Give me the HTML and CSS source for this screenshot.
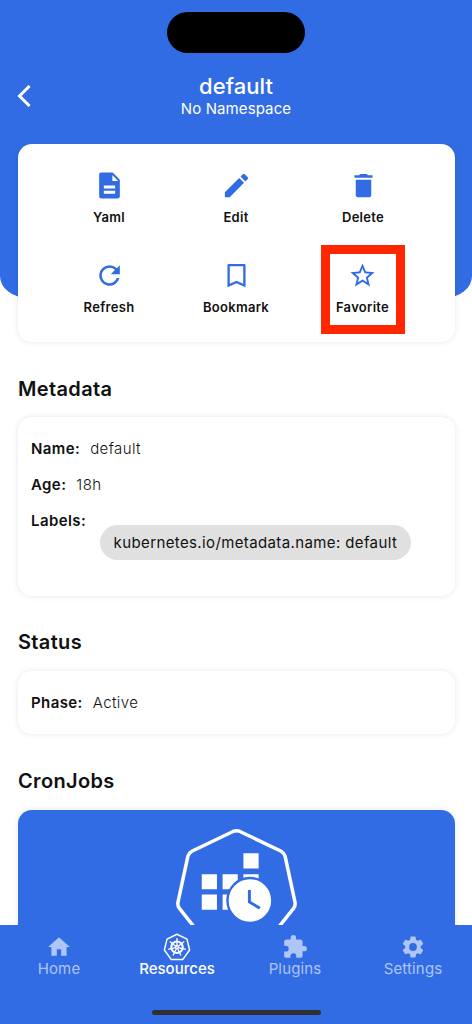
FILE: index.html
```html
<!DOCTYPE html>
<html lang="en">
<head>
<meta charset="utf-8">
<title>default</title>
<link rel="stylesheet" href="styles.css">
</head>
<body>
<div class="screen">
  <header class="header">
    <div class="island"></div>
    <div class="bar">
      <svg class="back" viewBox="0 0 14 22"><path d="M12.6 1 2.5 11l10.1 10"/></svg>
      <div class="titles"><h1>default</h1><p>No Namespace</p></div>
    </div>
  </header>
  <main class="content">
    <section class="card actions">
      <div class="action"><svg viewBox="0 0 24 24"><path fill-rule="evenodd" d="M14.500 2H5.500C4.700 2 4 2.700 4 3.500v17c0 .8.7 1.500 1.500 1.500h13c.8 0 1.500-.7 1.500-1.500V7.500L14.500 2zM14.200 3.800 18.700 8.500h-4.500zM7.600 12h8.800v2.400H7.600zM7.600 16h8.800v2.400H7.600z"/></svg><span>Yaml</span></div>
      <div class="action"><svg viewBox="0 0 24 24"><path d="M3 17.250V21h3.750L17.810 9.940l-3.750-3.750L3 17.250zM20.710 7.040a1 1 0 0 0 0-1.410l-2.340-2.340a1 1 0 0 0-1.410 0l-1.830 1.830 3.750 3.750 1.830-1.830z"/></svg><span>Edit</span></div>
      <div class="action"><svg viewBox="0 0 24 24"><path d="M6 19.500c0 .8.7 1.500 1.500 1.500h9c.8 0 1.500-.7 1.500-1.500V7.500H6v12zM19 4h-3.500l-1-1h-5l-1 1H5v2h14V4z"/></svg><span>Delete</span></div>
      <div class="action"><svg viewBox="0 0 24 24"><path d="M17.650 6.350A7.960 7.960 0 0 0 12 4a8 8 0 1 0 7.730 10h-2.080A6 6 0 1 1 12 6c1.660 0 3.140.69 4.220 1.780L13 11h7V4l-2.350 2.350z"/></svg><span>Refresh</span></div>
      <div class="action"><svg viewBox="0 0 24 24"><path d="M18 3H6a1 1 0 0 0-1 1v17l7-3 7 3V4a1 1 0 0 0-1-1zm-.8 15.300L12 16.100l-5.200 2.200V4.800h10.400v13.500z"/></svg><span>Bookmark</span></div>
      <div class="action marked"><svg class="star" viewBox="0 0 24 24"><path d="m22 9.240-7.190-.62L12 2 9.190 8.630 2 9.240l5.460 4.730L5.820 21 12 17.270 18.180 21l-1.630-7.030L22 9.240zM12 15.400l-3.760 2.270 1-4.280-3.320-2.880 4.380-.38L12 6.100l1.710 4.040 4.380.38-3.320 2.880 1 4.280L12 15.400z"/></svg><span>Favorite</span></div>
    </section>
    <h2>Metadata</h2>
    <section class="card meta">
      <div class="row"><b>Name:</b><span>default</span></div>
      <div class="row"><b>Age:</b><span>18h</span></div>
      <div class="row"><b>Labels:</b><span class="chip">kubernetes.io/metadata.name: default</span></div>
    </section>
    <h2>Status</h2>
    <section class="card status">
      <div class="row"><b>Phase:</b><span>Active</span></div>
    </section>
    <h2>CronJobs</h2>
    <section class="card cron">
      <svg viewBox="0 0 130 130">
        <path class="hept" d="M62.500 5.500Q66 4 69.500 5.500L111 25.500Q114 27.200 115 30.500L125 77Q125.600 80.500 123.500 83L95 119Q93 121 90 121H42Q39 121 37 119L8.500 83Q6.400 80.500 7 77L17 30.500Q18 27.200 21 25.500Z"/>
        <path class="solid" d="M73 27.500h15.300v15.300H73zM31 48.500h15.300v15.300H31zM52 48.500h15.300v15.300H52zM73 48.500h15.300v15.300H73zM31 69h15.300v15.300H31zM52 69h15.300v15.300H52z"/>
        <circle class="clock" cx="79.500" cy="75" r="22.600"/>
        <path class="hands" d="M79 64.500V76.500l10.500 6.300"/>
      </svg>
    </section>
  </main>
  <nav class="tabs">
    <div class="tab"><svg viewBox="0 0 24 24"><path d="M10 20v-6h4v6h5v-8h3L12 3 2 12h3v8z"/></svg><span>Home</span></div>
    <div class="tab active"><svg class="wheel" viewBox="0 0 28 28">
      <path d="M14 1.300 24 6.100 26.600 17 19.700 26.600H8.300L1.400 17 4 6.100Z"/>
      <circle class="rim" cx="14" cy="14.200" r="5.700"/><circle cx="14" cy="14.200" r="1.400"/>
      <path class="spokes" d="M14 5v7.500M21.200 8.500l-5.900 4.700M23 16.300l-7.400-1.700M18 22.500l-3.300-6.800M10 22.500l3.300-6.800M5 16.300l7.400-1.700M6.800 8.500l5.900 4.700"/></svg><span>Resources</span></div>
    <div class="tab"><svg viewBox="0 0 24 24"><path d="M20.500 11H19V7c0-1.100-.9-2-2-2h-4V3.500a2.500 2.500 0 0 0-5 0V5H4c-1.100 0-1.990.9-1.990 2v3.800H3.500a2.700 2.700 0 0 1 0 5.400H2V20c0 1.100.9 2 2 2h3.800v-1.500a2.700 2.700 0 0 1 5.400 0V22H17c1.100 0 2-.9 2-2v-4h1.500a2.500 2.500 0 0 0 0-5z"/></svg><span>Plugins</span></div>
    <div class="tab"><svg viewBox="0 0 24 24"><path d="M19.140 12.940c.04-.3.060-.61.060-.94s-.02-.64-.07-.94l2.030-1.580a.49.490 0 0 0 .12-.61l-1.920-3.320a.49.490 0 0 0-.59-.22l-2.390.96c-.5-.38-1.030-.7-1.620-.94l-.36-2.540a.48.480 0 0 0-.48-.41h-3.840a.47.470 0 0 0-.47.410l-.36 2.540c-.59.240-1.130.57-1.620.94l-2.390-.96a.48.480 0 0 0-.59.220L2.740 8.870a.47.470 0 0 0 .12.610l2.030 1.580c-.05.3-.09.630-.09.940s.02.640.07.940l-2.030 1.580a.49.490 0 0 0-.12.610l1.920 3.320c.12.220.37.290.59.220l2.390-.96c.5.380 1.030.7 1.620.94l.36 2.540c.05.240.24.410.48.410h3.840c.24 0 .44-.17.470-.41l.36-2.540c.59-.24 1.130-.56 1.620-.94l2.390.96c.22.080.47 0 .59-.22l1.920-3.320a.47.470 0 0 0-.12-.61l-2.010-1.580zM12 15.600a3.600 3.600 0 1 1 0-7.200 3.600 3.600 0 0 1 0 7.200z"/></svg><span>Settings</span></div>
    <div class="home-bar"></div>
  </nav>
</div>
</body>
</html>
```
FILE: styles.css
```css
* { box-sizing: border-box; }
body { margin: 0; font-family: Inter, "Liberation Sans", sans-serif; color: #111; background: #fff; }
h1, h2, p { margin: 0; }
.screen { width: 472px; height: 1024px; overflow: hidden; display: flex; flex-direction: column; }
.header { flex: none; height: 298px; padding-top: 12px; background: #326ce5; border-radius: 0 0 28px 28px / 0 0 22px 22px; color: #fff; }
.island { width: 138px; height: 41px; margin: 0 auto; border-radius: 21px; background: #000; }
.bar { display: grid; grid-template-columns: 32px 1fr 32px; margin-top: 20px; }
.back { width: 14px; height: 22px; margin: 12px 0 0 17px; fill: none; stroke: #fff; stroke-width: 3; }
.titles { text-align: center; }
h1 { font-size: 22px; line-height: 26px; font-weight: 500; letter-spacing: .05px; }
.titles p { margin-top: 1px; font-size: 15px; line-height: 18px; letter-spacing: .1px; }
.content { flex: 1; min-height: 0; margin-top: -154px; padding: 0 17.500px; overflow: hidden; }
.card { background: #fff; border-radius: 14px; box-shadow: 0 0 6px rgba(0,0,0,.1); }
.actions { height: 198px; padding: 18px 28px 0; display: grid; grid-template-columns: repeat(3, 127px); grid-auto-rows: 90px; }
.action { display: flex; flex-direction: column; align-items: center; padding-top: 8px; font-size: 13px; font-weight: 600; line-height: 18px; letter-spacing: .3px; }
.action svg { width: 31px; height: 31px; margin-bottom: 7px; fill: #326ce5; }
.action .star { width: 29px; height: 29px; margin: 1px 0 8px; }
.marked { width: 84px; height: 89px; margin: -7px 0 0 21px; padding-top: 6px; border: 9px solid #ff2600; white-space: nowrap; }
h2 { font-size: 20px; font-weight: 600; line-height: 26px; letter-spacing: .35px; padding-left: .5px; }
.actions + h2 { margin-top: 34px; }
.meta { height: 179px; margin: 15px 0 33px; padding: 20px 13.500px; }
.row { display: flex; height: 36px; font-size: 15px; line-height: 24px; letter-spacing: .4px; }
.row b { font-weight: 600; margin-right: 10px; }
.row span { font-weight: 300; }
.row .chip { height: 35px; margin: 16px 0 0 4px; padding: 0 13.500px; border-radius: 18px; background: #e0e0e0; font-weight: 400; line-height: 35px; letter-spacing: .38px; white-space: nowrap; }
.status { height: 63px; margin: 16px 0 34px; padding: 20px 13.500px; }
.cron { height: 180px; margin-top: 16px; padding: 16px 1px 0 0; background: #326ce5; text-align: center; }
.cron svg { width: 129px; height: 129px; }
.hept { fill: none; stroke: #fff; stroke-width: 3.500; }
.solid { fill: #fff; }
.clock { fill: #fff; stroke: #326ce5; stroke-width: 2.400; }
.hands { fill: none; stroke: #326ce5; stroke-width: 3; }
.tabs { flex: none; height: 99px; background: #326ce5; display: grid; grid-template-columns: repeat(4, 1fr); grid-template-rows: 84px auto; color: #aec5f5; }
.tab { display: flex; flex-direction: column; align-items: center; padding-top: 9px; font-size: 15px; line-height: 18px; letter-spacing: .15px; }
.tab svg { width: 26px; height: 26px; fill: currentColor; }
.tab.active { color: #fff; font-weight: 500; letter-spacing: 0; }
.tab .wheel { width: 28px; height: 28px; margin: -1px 0; fill: none; stroke: #fff; stroke-width: 1.500; stroke-linejoin: round; }
.wheel .rim { stroke-width: 2; }
.wheel .spokes { stroke-width: 1.300; }
.home-bar { grid-column: 1 / -1; width: 169px; height: 5px; margin: 1px auto 0; border-radius: 3px; background: #303030; }
```
